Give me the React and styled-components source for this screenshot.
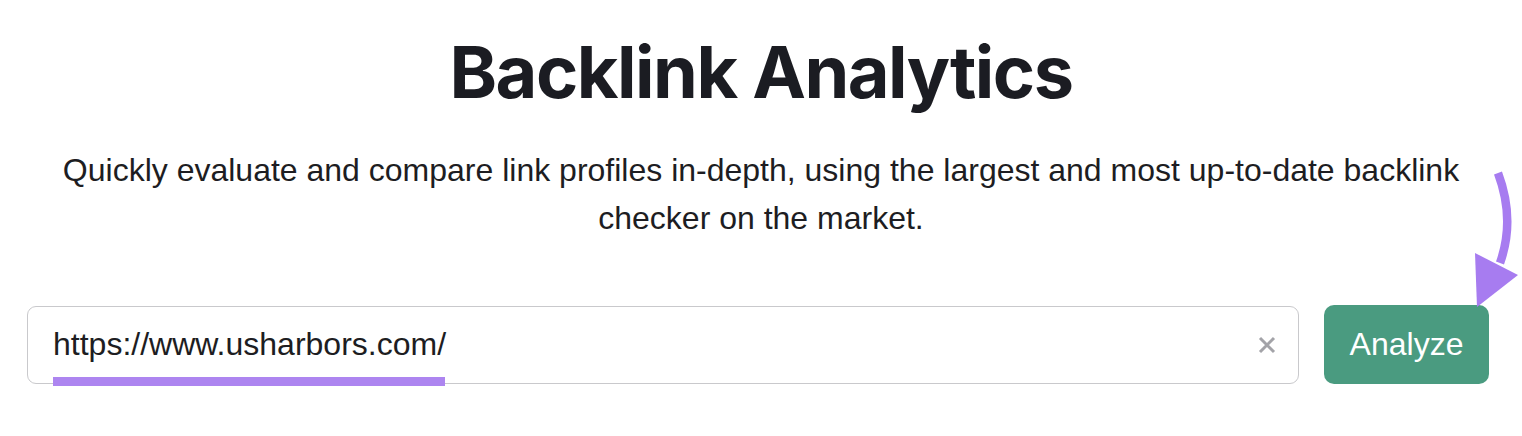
import React from "react";
import styled, { createGlobalStyle } from "styled-components";

const Global = createGlobalStyle`
  html, body { margin: 0; padding: 0; background: #ffffff; }
  body { font-family: "Liberation Sans", Arial, sans-serif; color: #1d1d22; }
`;

const Page = styled.main`
  position: relative;
  width: 1522px;
  height: 436px;
  display: flex;
  flex-direction: column;
  align-items: center;
  overflow: hidden;
`;

const Title = styled.h1`
  margin: 30px 0 0;
  font-family: "Inter", sans-serif;
  font-weight: 700;
  font-size: 72px;
  line-height: 84px;
  letter-spacing: -1.5px;
  color: #1b1c22;
`;

const Subtitle = styled.p`
  margin: 32px 0 0;
  width: 1440px;
  text-align: center;
  font-size: 32px;
  line-height: 48px;
  color: #1d1d22;
`;

const FormRow = styled.div`
  align-self: stretch;
  display: flex;
  align-items: center;
  gap: 25px;
  margin-top: 63px;
  padding: 0 33px 0 27px;
`;

const InputBox = styled.div`
  position: relative;
  flex: 1;
  height: 78px;
  box-sizing: border-box;
  border: 1.5px solid #c9c9cc;
  border-radius: 9px;
  display: flex;
  align-items: center;
  padding: 0 20px 0 25px;
`;

const UrlText = styled.span`
  flex: 1;
  font-size: 32px;
  color: #1d1d22;
`;

const Underline = styled.span`
  position: absolute;
  left: 25px;
  bottom: -3px;
  width: 392px;
  height: 9px;
  background: #ad85f0;
`;

const ClearButton = styled.span`
  display: flex;
  align-items: center;
  justify-content: center;
  width: 22px;
  height: 22px;
`;

const AnalyzeButton = styled.button`
  width: 165px;
  height: 79px;
  border: none;
  border-radius: 10px;
  background: #4a9b80;
  color: #ffffff;
  font-family: "Liberation Sans", Arial, sans-serif;
  font-size: 32px;
  padding: 0;
`;

const Arrow = styled.svg`
  position: absolute;
  left: 1460px;
  top: 165px;
`;

export default function App() {
  return (
    <>
      <Global />
      <Page>
        <Title>Backlink Analytics</Title>
        <Subtitle>
          Quickly evaluate and compare link profiles in-depth, using the largest and most up-to-date backlink checker on the market.
        </Subtitle>
        <FormRow>
          <InputBox>
            <UrlText>https://www.usharbors.com/</UrlText>
            <Underline />
            <ClearButton>
              <svg width="20" height="20" viewBox="0 0 20 20">
                <path d="M3 3 L17 17 M17 3 L3 17" stroke="#a3a3a8" strokeWidth="3" strokeLinecap="butt" />
              </svg>
            </ClearButton>
          </InputBox>
          <AnalyzeButton>Analyze</AnalyzeButton>
        </FormRow>
        <Arrow width="62" height="150" viewBox="0 0 62 150">
          <path d="M38 8 C 50 40, 50 70, 40 98" stroke="#a77cf0" strokeWidth="8.5" fill="none" strokeLinecap="butt" />
          <polygon points="15,88 58,110 17,142" fill="#a77cf0" />
        </Arrow>
      </Page>
    </>
  );
}
